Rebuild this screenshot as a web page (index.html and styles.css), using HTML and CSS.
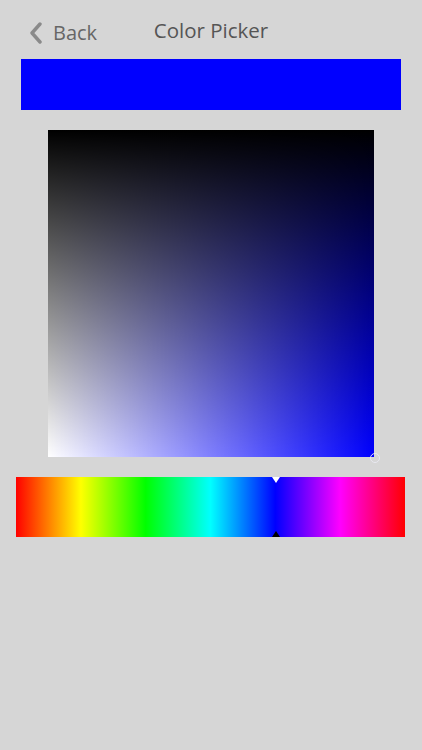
FILE: index.html
```html
<!DOCTYPE html>
<html>
<head>
<meta charset="utf-8">
<link rel="stylesheet" href="styles.css">
</head>
<body>
<div class="page">
  <div class="nav">
    <div class="back">
      <svg class="chev" width="16" height="22" viewBox="0 0 16 22"><path d="M12 2 L4 11 L12 20" fill="none" stroke="#8a8a8a" stroke-width="3.4" stroke-linecap="round" stroke-linejoin="round"/></svg>
      <span>Back</span>
    </div>
    <div class="title">Color Picker</div>
  </div>
  <div class="swatch"></div>
  <div class="square">
    <div class="sat"></div>
    <div class="val"></div>
    <div class="dot"></div>
  </div>
  <div class="hue">
    <div class="tri-top"></div>
    <div class="tri-bot"></div>
  </div>
</div>
</body>
</html>
```
FILE: styles.css
```css
html, body {
  margin: 0;
  padding: 0;
  background: #d6d6d6;
}
.page {
  width: 422px;
  height: 750px;
  position: relative;
  font-family: "Open Sans", "Noto Sans", sans-serif;
}
.nav {
  height: 59px;
  position: relative;
}
.back {
  position: absolute;
  left: 28px;
  top: 19px;
  display: flex;
  align-items: center;
  gap: 9px;
  color: #666;
  font-size: 20px;
}
.chev { display: block; }
.title {
  position: absolute;
  left: 0;
  right: 0;
  top: 16px;
  text-align: center;
  font-size: 20.5px;
  color: #555;
  line-height: 28px;
}
.swatch {
  margin-left: 21px;
  width: 380px;
  height: 51px;
  background: #0000ff;
}
.square {
  margin-top: 20px;
  margin-left: 48px;
  width: 326px;
  height: 327px;
  position: relative;
  background: #0000ff;
}
.sat {
  position: absolute;
  inset: 0;
  background: linear-gradient(to right, #fff, rgba(255,255,255,0));
}
.val {
  position: absolute;
  inset: 0;
  background: linear-gradient(to bottom, #000, rgba(0,0,0,0));
}
.dot {
  position: absolute;
  right: -6px;
  bottom: -6px;
  width: 8px;
  height: 8px;
  border: 1.5px solid #e8e8f0;
  border-radius: 50%;
}
.hue {
  margin-top: 20px;
  margin-left: 16px;
  width: 389px;
  height: 60px;
  position: relative;
  background: linear-gradient(to right, #f00 0%, #ff0 16.67%, #0f0 33.33%, #0ff 50%, #00f 66.67%, #f0f 83.33%, #f00 100%);
}
.tri-top {
  position: absolute;
  left: 256px;
  top: 0;
  width: 0;
  height: 0;
  border-left: 4px solid transparent;
  border-right: 4px solid transparent;
  border-top: 6px solid #fff;
}
.tri-bot {
  position: absolute;
  left: 256px;
  bottom: 0;
  width: 0;
  height: 0;
  border-left: 4px solid transparent;
  border-right: 4px solid transparent;
  border-bottom: 6px solid #000;
}
```
